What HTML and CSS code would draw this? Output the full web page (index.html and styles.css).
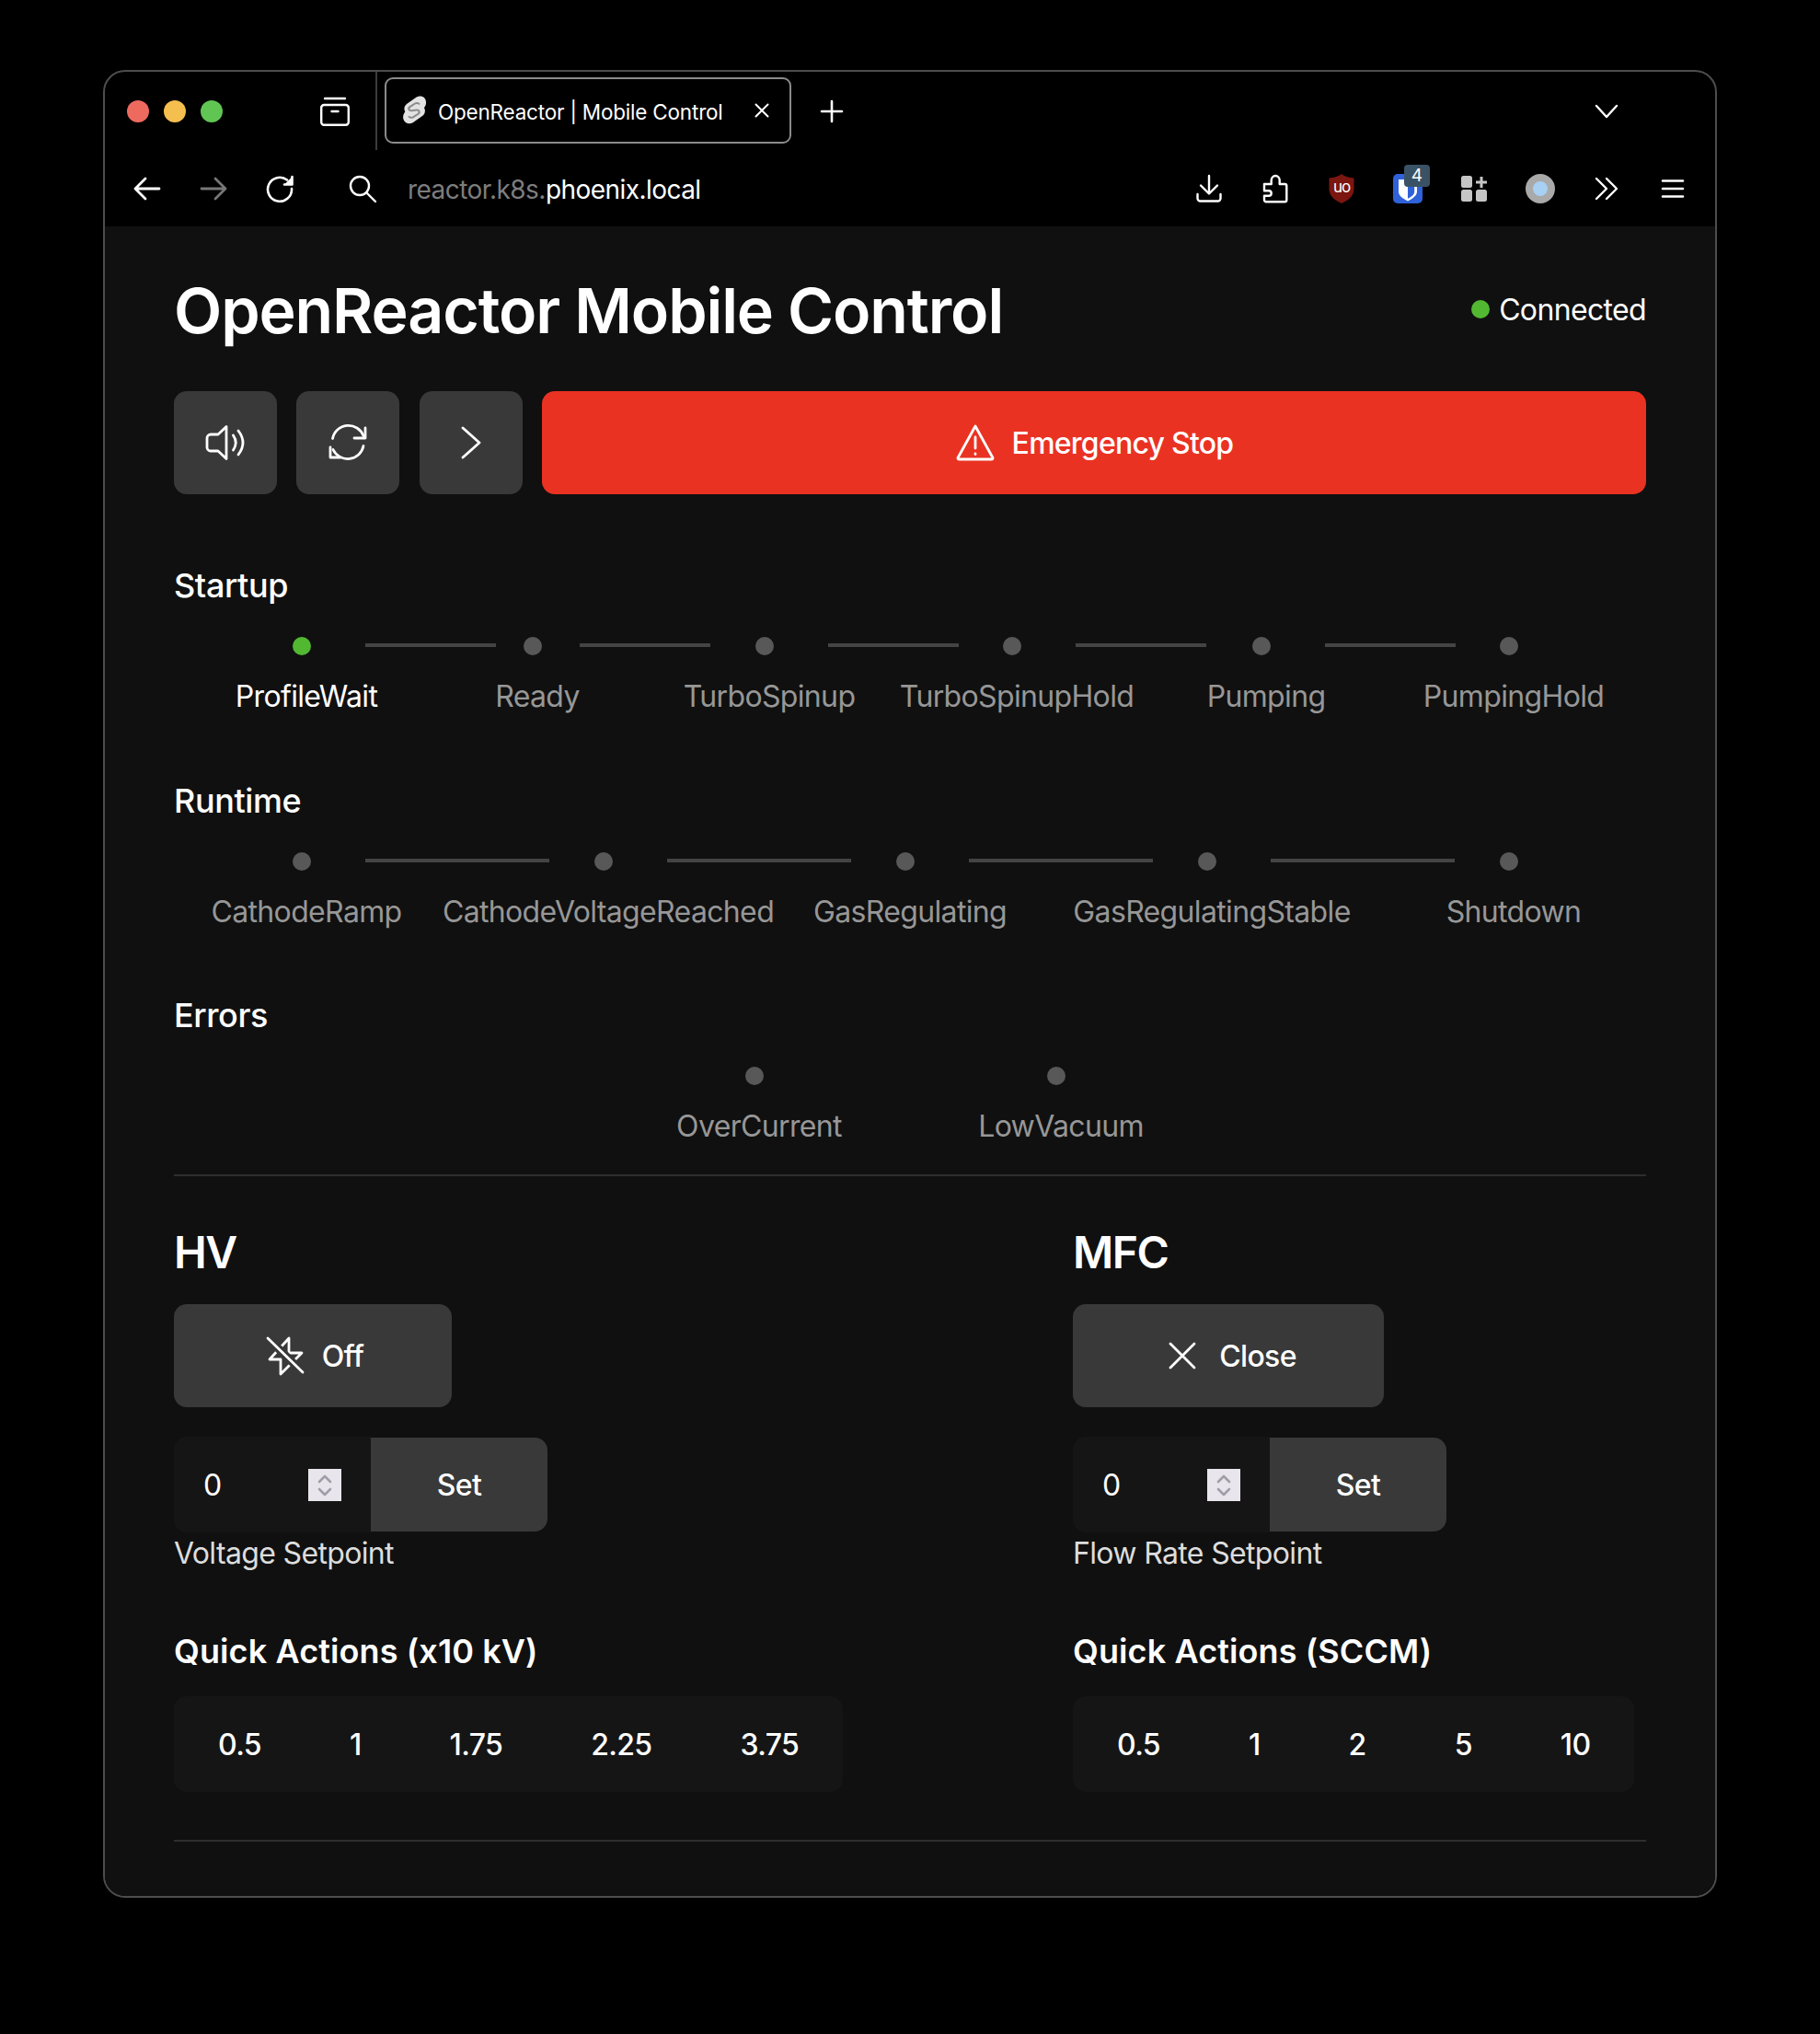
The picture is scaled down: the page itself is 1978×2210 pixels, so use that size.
FILE: index.html
```html
<!DOCTYPE html>
<html lang="en">
<head>
  <meta charset="UTF-8">
  <title>OpenReactor | Mobile Control</title>
  <link rel="stylesheet" href="styles.css">
</head>
<body>
  <div class="window">
    <div class="tabstrip">
      <div class="traffic">
        <span class="light red"></span>
        <span class="light yellow"></span>
        <span class="light green"></span>
      </div>
      <svg class="archive" width="32" height="32" viewBox="0 0 32 32" fill="none" stroke="#fff" stroke-width="2.4" stroke-linecap="round" stroke-linejoin="round">
        <path d="M5 2h22"/>
        <rect x="1.2" y="9" width="29.6" height="21.8" rx="3"/>
        <path d="M12.5 16h7"/>
      </svg>
      <span class="tab-sep"></span>
      <div class="tab">
        <svg class="favicon" width="28" height="32" viewBox="0 0 26 32" preserveAspectRatio="none">
          <path d="M15.500 1.500c4.500-2.400 8.800-.2 9.500 4.500.4 2.600-.3 5-1.800 7 1.700 3.200.8 7.200-2.200 9.300l-9.200 7c-4.300 2.400-8.800.2-9.700-4.500-.5-2.700.3-5.200 1.900-7.300-1.700-3.200-.8-7.100 2.200-9.100z" fill="#e2e2e2"/>
          <path d="M18.500 9.500c-1-1.600-3-2-4.500-1l-5.200 3.600c-2.200 1.600-.9 4.500 1.600 4.200l5.300-.7c2.500-.2 3.600 2.600 1.500 4.200l-5.200 3.500c-1.600 1-3.500.6-4.500-1" fill="none" stroke="#8c8c8c" stroke-width="2"/>
        </svg>
        <span class="tab-title">OpenReactor | Mobile Control</span>
        <svg class="tab-close" width="18" height="18" viewBox="0 0 18 18" stroke="#fff" stroke-width="2" stroke-linecap="round"><path d="M2.500 2.500l13 13M15.500 2.500l-13 13"/></svg>
      </div>
      <svg class="newtab" width="26" height="26" viewBox="0 0 26 26" stroke="#fff" stroke-width="2.600" stroke-linecap="round"><path d="M13 2v22M2 13h22"/></svg>
      <svg class="tabs-menu" width="26" height="16" viewBox="0 0 26 16" fill="none" stroke="#fff" stroke-width="2.400" stroke-linecap="round" stroke-linejoin="round"><path d="M2 2l11 12L24 2"/></svg>
    </div>

    <div class="toolbar">
      <span class="slot">
        <svg width="32" height="28" viewBox="0 0 32 28" fill="none" stroke="#fff" stroke-width="2.800" stroke-linecap="round" stroke-linejoin="round"><path d="M29 14H3M14 3L3 14l11 11"/></svg>
      </span>
      <span class="slot">
        <svg width="32" height="28" viewBox="0 0 32 28" fill="none" stroke="#777" stroke-width="2.800" stroke-linecap="round" stroke-linejoin="round"><path d="M3 14h26M18 3l11 11-11 11"/></svg>
      </span>
      <span class="slot">
        <svg width="32" height="32" viewBox="0 0 32 32" fill="none" stroke="#fff" stroke-width="2.600" stroke-linecap="round" stroke-linejoin="round"><path d="M24 6.500A13 13 0 1 0 29 16"/><path d="M29.500 3v8.500H21" fill="#fff"/></svg>
      </span>
      <svg class="search" width="32" height="32" viewBox="0 0 32 32" fill="none" stroke="#fff" stroke-width="2.400" stroke-linecap="round"><circle cx="13" cy="13" r="10"/><path d="M20.500 20.500L30 30"/></svg>
      <span class="url"><span class="url-dim">reactor.k8s.</span>phoenix.local</span>
      <div class="addons">
        <span class="slot">
          <svg width="30" height="32" viewBox="0 0 30 32" fill="none" stroke="#fff" stroke-width="2.400" stroke-linecap="round" stroke-linejoin="round"><path d="M15 2v19M6 12.500l9 9 9-9"/><path d="M2.500 22v4.500a3 3 0 0 0 3 3h19a3 3 0 0 0 3-3V22"/></svg>
        </span>
        <span class="slot">
          <svg width="30" height="34" viewBox="0 0 30 34" fill="none" stroke="#fff" stroke-width="2.400" stroke-linejoin="round"><path d="M3 12h7.700V8a4.500 5 0 0 1 9 0v4h5.600a2 2 0 0 1 2 2v15.300a2 2 0 0 1-2 2H5a2 2 0 0 1-2-2v-4.600h5a2.700 2.700 0 0 0 0-5.400H3z"/></svg>
        </span>
        <span class="slot">
          <svg width="30" height="32" viewBox="0 0 30 32">
            <path d="M15 0c3 2.500 8 4 13.500 4.500V16c0 7.500-5.500 12.500-13.500 16C7 28.500 1.500 23.500 1.500 16V4.500C7 4 12 2.500 15 0z" fill="#7b1610"/>
            <text x="15" y="20" class="ublock">uo</text>
          </svg>
        </span>
        <span class="slot badge-slot">
          <svg width="32" height="32" viewBox="0 0 32 32">
            <rect width="32" height="32" rx="5" fill="#2f62d9"/>
            <path d="M6 6h20v13c0 5-5 7.800-10 10.500C11 26.800 6 24 6 19z" fill="#fff"/>
            <path d="M16 9h7.200v10c0 3.500-3.200 5.700-7.200 7.800z" fill="#2f62d9"/>
          </svg>
          <span class="count">4</span>
        </span>
        <span class="slot">
          <svg width="28" height="28" viewBox="0 0 28 28" fill="#c6c6c6">
            <rect width="12" height="13" rx="2.500"/>
            <rect y="15" width="12" height="13" rx="2.500"/>
            <rect x="16" y="15" width="12" height="13" rx="2.500"/>
            <path d="M20.500 1h3v4.500H28v3h-4.500V13h-3V8.500H16v-3h4.500z"/>
          </svg>
        </span>
        <span class="slot"><span class="profile"></span></span>
        <span class="slot">
          <svg width="26" height="26" viewBox="0 0 26 26" fill="none" stroke="#fff" stroke-width="2.400" stroke-linecap="round" stroke-linejoin="round"><path d="M2 2l11 11L2 24M13 2l11 11-11 11"/></svg>
        </span>
        <span class="slot">
          <svg width="26" height="22" viewBox="0 0 26 22" stroke="#fff" stroke-width="2.600" stroke-linecap="round"><path d="M2 2.500h22M2 11h22M2 19.500h22"/></svg>
        </span>
      </div>
    </div>

    <main class="content">
      <header class="page-head">
        <h1>OpenReactor Mobile Control</h1>
        <div class="status"><span class="status-dot"></span>Connected</div>
      </header>

      <div class="actions">
        <button class="btn square">
          <svg width="48" height="48" viewBox="0 0 48 48" fill="none" stroke="#fff" stroke-width="2.800" stroke-linecap="round" stroke-linejoin="round"><path d="M25 6.500v35L16 33H8a4 4 0 0 1-4-4V19a4 4 0 0 1 4-4h8z"/><path d="M32.500 16q5.500 8 0 16M38 11q10 13 0 26"/></svg>
        </button>
        <button class="btn square">
          <svg width="48" height="48" viewBox="0 0 48 48" fill="none" stroke="#fff" stroke-width="2.800" stroke-linecap="round" stroke-linejoin="round"><path d="M7.500 19.500A17.500 17.500 0 0 1 41 16.500"/><path d="M43 8v11H31"/><path d="M41 27.500A17.500 17.500 0 0 1 8 31.500"/><path d="M5 29v11h11"/></svg>
        </button>
        <button class="btn square">
          <svg width="48" height="48" viewBox="0 0 48 48" fill="none" stroke="#fff" stroke-width="2.800" stroke-linecap="round" stroke-linejoin="round"><path d="M15 8l18 16-18 16"/></svg>
        </button>
        <button class="btn danger">
          <svg width="44" height="42" viewBox="0 0 44 42" fill="none" stroke="#fff" stroke-width="2.800" stroke-linecap="round" stroke-linejoin="round"><path d="M22 3L3 37.500a1.500 1.500 0 0 0 1.500 1.500h35a1.500 1.500 0 0 0 1.500-1.500z"/><path d="M22 15v12M22 33v.5"/></svg>
          Emergency Stop
        </button>
      </div>

      <section class="state-group">
        <h3>Startup</h3>
        <div class="steps steps-startup">
          <div class="step active"><span class="dot"></span><span class="step-label">ProfileWait</span></div>
          <div class="step"><span class="dot"></span><span class="step-label">Ready</span></div>
          <div class="step"><span class="dot"></span><span class="step-label">TurboSpinup</span></div>
          <div class="step"><span class="dot"></span><span class="step-label">TurboSpinupHold</span></div>
          <div class="step"><span class="dot"></span><span class="step-label">Pumping</span></div>
          <div class="step"><span class="dot"></span><span class="step-label">PumpingHold</span></div>
        </div>
      </section>

      <section class="state-group">
        <h3>Runtime</h3>
        <div class="steps steps-runtime">
          <div class="step"><span class="dot"></span><span class="step-label">CathodeRamp</span></div>
          <div class="step"><span class="dot"></span><span class="step-label">CathodeVoltageReached</span></div>
          <div class="step"><span class="dot"></span><span class="step-label">GasRegulating</span></div>
          <div class="step"><span class="dot"></span><span class="step-label">GasRegulatingStable</span></div>
          <div class="step"><span class="dot"></span><span class="step-label">Shutdown</span></div>
        </div>
      </section>

      <section class="state-group">
        <h3>Errors</h3>
        <div class="steps steps-errors">
          <div class="step"><span class="dot"></span><span class="step-label">OverCurrent</span></div>
          <div class="step"><span class="dot"></span><span class="step-label">LowVacuum</span></div>
        </div>
      </section>

      <hr class="rule rule-top">

      <div class="controls">
        <section>
          <h2>HV</h2>
          <button class="btn toggle hv-toggle">
            <svg width="48" height="48" viewBox="0 0 48 48" fill="none" stroke-linecap="round" stroke-linejoin="round">
              <path d="M29 5L8 28h12v16l23-23H29z" stroke="#fff" stroke-width="2.800"/>
              <path d="M6 5l38 37" stroke="#393939" stroke-width="9"/>
              <path d="M6 5l38 37" stroke="#fff" stroke-width="2.800"/>
            </svg>
            Off
          </button>
          <div class="setpoint">
            <div class="number-field">
              <input class="number-input" type="text" value="0">
              <span class="spinner">
                <svg width="36" height="35" viewBox="0 0 36 35" fill="none" stroke="#a09ea8" stroke-width="2.600" stroke-linecap="round" stroke-linejoin="round"><path d="M12 14l6-6 6 6M12 22l6 6 6-6"/></svg>
              </span>
            </div>
            <button class="set-btn">Set</button>
          </div>
          <div class="setpoint-label">Voltage Setpoint</div>
          <h4>Quick Actions (x10 kV)</h4>
          <div class="quick-group">
            <button class="quick">0.5</button>
            <button class="quick">1</button>
            <button class="quick">1.75</button>
            <button class="quick">2.25</button>
            <button class="quick">3.75</button>
          </div>
        </section>

        <section>
          <h2>MFC</h2>
          <button class="btn toggle mfc-toggle">
            <svg width="48" height="48" viewBox="0 0 48 48" fill="none" stroke="#fff" stroke-width="2.800" stroke-linecap="round"><path d="M11 11l26 26M37 11L11 37"/></svg>
            Close
          </button>
          <div class="setpoint">
            <div class="number-field">
              <input class="number-input" type="text" value="0">
              <span class="spinner">
                <svg width="36" height="35" viewBox="0 0 36 35" fill="none" stroke="#a09ea8" stroke-width="2.600" stroke-linecap="round" stroke-linejoin="round"><path d="M12 14l6-6 6 6M12 22l6 6 6-6"/></svg>
              </span>
            </div>
            <button class="set-btn">Set</button>
          </div>
          <div class="setpoint-label">Flow Rate Setpoint</div>
          <h4>Quick Actions (SCCM)</h4>
          <div class="quick-group">
            <button class="quick">0.5</button>
            <button class="quick">1</button>
            <button class="quick">2</button>
            <button class="quick">5</button>
            <button class="quick">10</button>
          </div>
        </section>
      </div>

      <hr class="rule rule-bottom">
    </main>
  </div>
</body>
</html>
```

FILE: styles.css
```css
* {
  box-sizing: border-box;
}
body {
  background: #000;
  color: #fff;
  font-family: Inter, "Liberation Sans", sans-serif;
  margin: 0;
  padding: 76px 112px 148px 112px;
}
button, input {
  font-family: inherit;
  color: inherit;
  letter-spacing: inherit;
}
svg {
  display: block;
}
.window {
  border: 2px solid #4d4d4d;
  border-radius: 24px;
  overflow: hidden;
  background: #000;
}

/* browser chrome */
.tabstrip {
  display: flex;
  align-items: center;
  height: 85px;
  padding-left: 24px;
}
.traffic {
  display: flex;
  gap: 16px;
}
.light {
  width: 24px;
  height: 24px;
  border-radius: 50%;
}
.light.red { background: #ee6a5f; }
.light.yellow { background: #f5bf4f; }
.light.green { background: #61c554; }
.archive {
  margin-left: 106px;
}
.tab-sep {
  width: 2px;
  height: 85px;
  background: #3c3c3c;
  margin-left: 28px;
}
.tab {
  display: flex;
  align-items: center;
  width: 442px;
  height: 72px;
  margin-left: 8px;
  margin-top: -1px;
  padding: 0 21px 0 16px;
  border: 2px solid #8a8a8a;
  border-radius: 9px;
}
.tab-title {
  font-size: 22.500px;
  font-weight: 400;
  letter-spacing: -.2px;
  margin: 3px 0 0 12px;
  white-space: nowrap;
}
.tab-close {
  margin-left: auto;
}
.newtab {
  margin-left: 31px;
}
.tabs-menu {
  margin-left: 816px;
}
.toolbar {
  display: flex;
  align-items: center;
  height: 83px;
  padding-left: 10px;
}
.slot {
  position: relative;
  display: flex;
  align-items: center;
  justify-content: center;
  width: 72px;
  height: 40px;
}
.search {
  margin-left: 38px;
}
.url {
  font-size: 28px;
  letter-spacing: -.55px;
  margin: 2px 0 0 33px;
  white-space: nowrap;
}
.url-dim {
  color: #7d7d7d;
}
.addons {
  display: flex;
  margin-left: auto;
  margin-right: 10px;
}
.ublock {
  font-size: 17px;
  font-weight: 400;
  fill: #fff;
  text-anchor: middle;
  letter-spacing: -1px;
}
.count {
  position: absolute;
  top: -6px;
  left: 32px;
  width: 28px;
  height: 24px;
  background: #3a5266;
  border-radius: 4px;
  font-size: 19px;
  line-height: 24px;
  text-align: center;
}
.profile {
  width: 32px;
  height: 32px;
  border-radius: 50%;
  border: 8px solid #a9a9a9;
  background: #a7d0f2;
}

/* page */
.content {
  background: #101010;
  padding: 45px 75px 59px;
  letter-spacing: -.65px;
}
.page-head {
  display: flex;
  align-items: center;
  justify-content: space-between;
  height: 90px;
}
h1 {
  font-size: 68px;
  font-weight: 600;
  letter-spacing: -1.1px;
  margin: 2px 0 0;
}
.status {
  display: flex;
  align-items: center;
  gap: 10px;
  font-size: 32px;
}
.status-dot {
  width: 20px;
  height: 20px;
  border-radius: 50%;
  background: #52b832;
}
.actions {
  display: flex;
  gap: 21.330px;
  margin-top: 44px;
}
.btn {
  display: flex;
  align-items: center;
  justify-content: center;
  height: 112px;
  border: 0;
  border-radius: 14px;
  background: #393939;
  font-size: 32px;
  font-weight: 500;
}
.btn.square {
  width: 112px;
}
.btn.danger {
  flex: 1;
  background: #ea3223;
  gap: 18px;
  letter-spacing: -.75px;
}
.state-group {
  margin-top: 65.500px;
}
.actions + .state-group {
  margin-top: 75px;
}
h3 {
  font-size: 36px;
  font-weight: 500;
  line-height: 48px;
  letter-spacing: -.4px;
  margin: 0;
}
.steps {
  display: grid;
  margin-top: 32px;
}
.steps-startup {
  grid-template-columns: 288px 214px 290px 248px 294px 244px;
}
.steps-runtime {
  grid-template-columns: repeat(5, 288px);
  gap: 40px;
}
.steps-errors {
  grid-template-columns: repeat(2, 288px);
  gap: 40px;
  justify-content: center;
}
.step {
  position: relative;
  display: flex;
  flex-direction: column;
  align-items: center;
}
.dot {
  width: 20px;
  height: 20px;
  border-radius: 50%;
  background: #585858;
  margin-right: 11px;
}
.step-label {
  margin-top: 21px;
  font-size: 32px;
  line-height: 47px;
  color: #979797;
  white-space: nowrap;
}
.step.active .dot {
  background: #52b832;
}
.step.active .step-label {
  color: #fff;
}
.steps-startup .step:not(:last-child)::after,
.steps-runtime .step:not(:last-child)::after {
  content: "";
  position: absolute;
  top: 7px;
  left: calc(50% + 64px);
  height: 4px;
  background: #444;
}
.steps-startup .step::after {
  width: 142px;
}
.steps-runtime .step::after {
  width: 200px;
}
.steps-startup .step:nth-child(2)::after {
  left: calc(50% + 46px);
}
.rule {
  border: 0;
  height: 2px;
  background: #2e2e2e;
  margin: 0;
}
.rule-top {
  margin-top: 29px;
}
.rule-bottom {
  margin-top: 52px;
}
.controls {
  display: grid;
  grid-template-columns: 977px 1fr;
  margin-top: 53px;
}
h2 {
  font-size: 48px;
  font-weight: 600;
  line-height: 60px;
  letter-spacing: -1.500px;
  margin: 0;
}
.toggle {
  gap: 17px;
  margin-top: 26px;
}
.hv-toggle {
  width: 302px;
}
.mfc-toggle {
  width: 338px;
  gap: 16px;
}
.setpoint {
  display: flex;
  align-items: center;
  width: 406px;
  margin-top: 32px;
}
.number-field {
  display: flex;
  align-items: center;
  width: 214px;
  height: 104px;
  background: #151515;
  border-radius: 14px 0 0 14px;
  padding-right: 32px;
}
.number-input {
  flex: 1;
  min-width: 0;
  border: 0;
  background: transparent;
  font-size: 32px;
  padding: 0 0 0 32px;
}
.spinner {
  width: 36px;
  height: 35px;
  background: #e8e6ec;
}
.set-btn {
  flex: 1;
  height: 102px;
  border: 0;
  border-radius: 0 14px 14px 0;
  background: #393939;
  font-size: 32px;
  font-weight: 500;
}
.setpoint-label {
  font-size: 32px;
  line-height: 46px;
  color: #ddd;
}
h4 {
  font-size: 36px;
  font-weight: 600;
  line-height: 48px;
  letter-spacing: .1px;
  margin: 59px 0 0;
}
.quick-group {
  display: inline-flex;
  height: 104px;
  margin-top: 25px;
  background: #151515;
  border-radius: 14px;
}
.quick {
  border: 0;
  background: transparent;
  font-size: 32px;
  font-weight: 500;
  padding: 0 48px;
}
```
